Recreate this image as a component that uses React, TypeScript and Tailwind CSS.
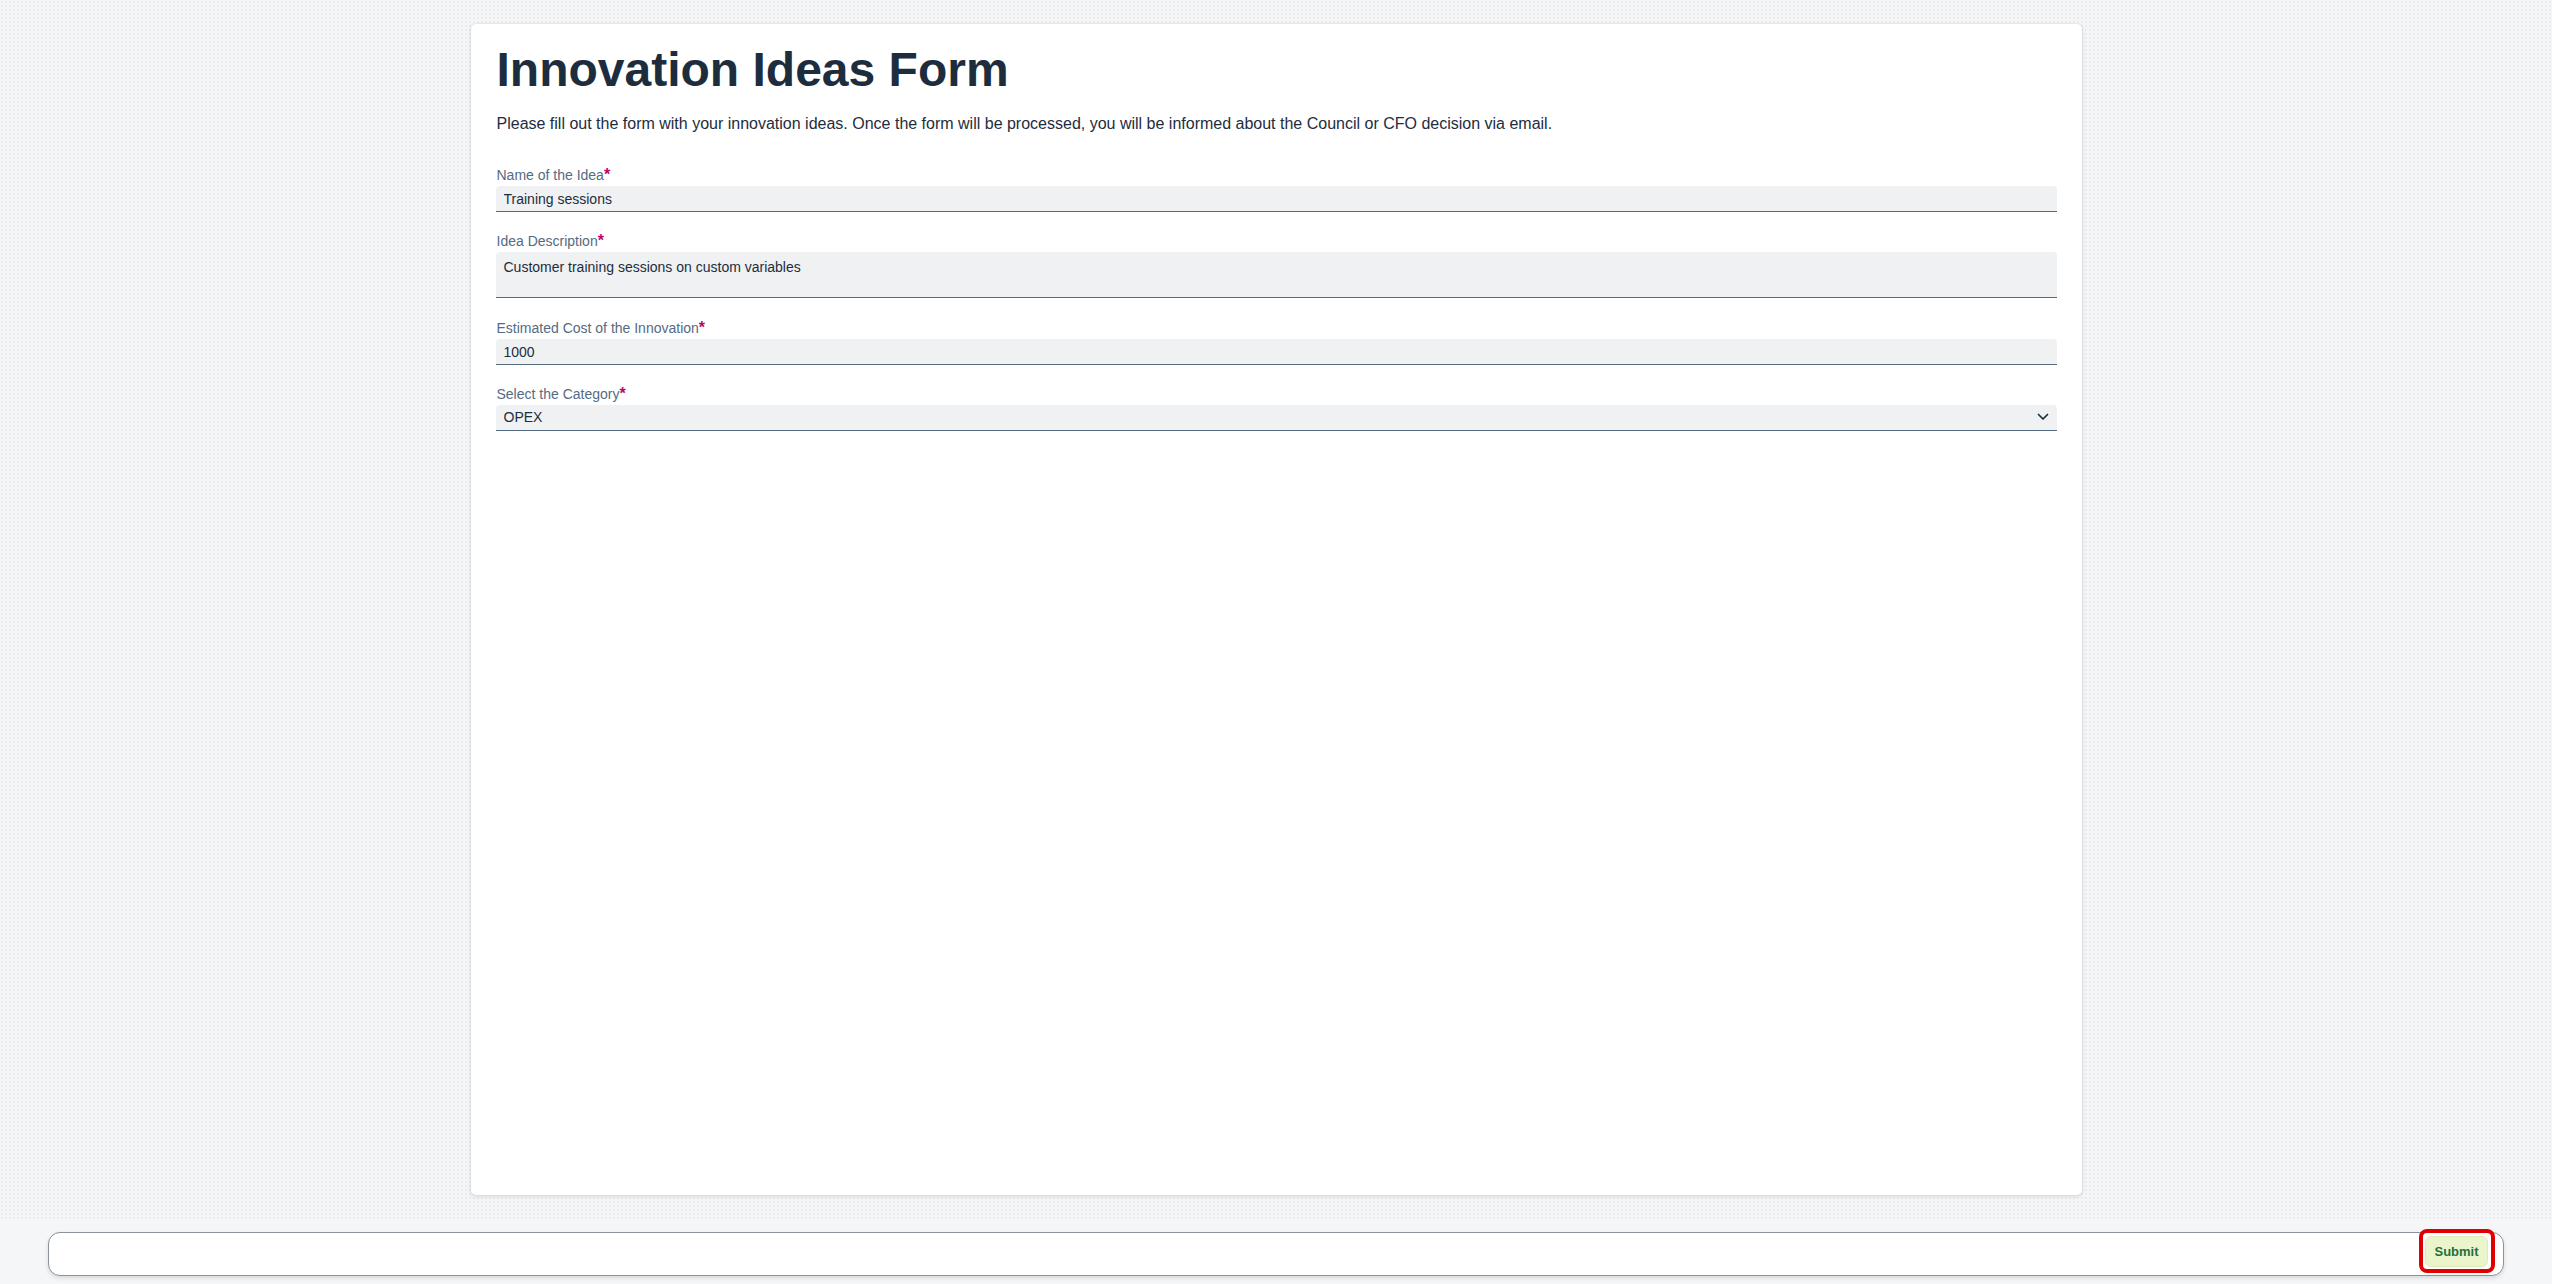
import { useState } from 'react'

const fieldFont = "font-['Liberation_Sans',Arial,sans-serif]"

function FieldLabel({ text }: { text: string }) {
  return (
    <label className="mb-[3px] block text-[14px] leading-[16px] text-[#556b82]">
      {text}
      <span className="text-[16px] font-bold leading-none text-[#ba066c]">*</span>
    </label>
  )
}

export default function App() {
  const [name, setName] = useState('Training sessions')
  const [description, setDescription] = useState('Customer training sessions on custom variables')
  const [cost, setCost] = useState('1000')
  const [category, setCategory] = useState('OPEX')

  return (
    <div className={`flex h-[1284px] flex-col bg-[#f5f6f7] ${fieldFont}`}>
      <div className="flex-1 bg-[radial-gradient(circle,#e3e5e9_0.6px,transparent_0.9px)] bg-[length:4px_4px] pt-6">
        <div className="mx-auto flex h-[1171px] w-[1611px] flex-col rounded-[5px] bg-white px-[25px] pt-[18px] shadow-[0_0_2px_rgba(34,53,72,0.2),0_2px_4px_rgba(34,53,72,0.1)]">
          <h1 className="pl-px text-[48px] font-bold leading-[56px] text-[#1d2d3e]">Innovation Ideas Form</h1>
          <p className="mt-[16px] pl-px text-[16px] leading-[20px] text-[#1d2d3e]">
            Please fill out the form with your innovation ideas. Once the form will be processed, you will be informed about the Council or CFO decision via email.
          </p>

          <form className="mt-[33px] flex flex-col gap-[21px]">
            <div className="flex flex-col pl-px">
              <FieldLabel text="Name of the Idea" />
              <input
                value={name}
                onChange={(e) => setName(e.target.value)}
                className="-ml-px h-[26px] w-[calc(100%+1px)] rounded-t-[4px] border-b border-[#556b81] bg-[#eff1f2] px-[8px] text-[14px] text-[#1d2d3e] outline-none"
              />
            </div>

            <div className="flex flex-col pl-px">
              <FieldLabel text="Idea Description" />
              <textarea
                value={description}
                onChange={(e) => setDescription(e.target.value)}
                rows={2}
                className="-ml-px h-[46px] w-[calc(100%+1px)] resize-none rounded-t-[4px] border-b border-[#556b81] bg-[#eff1f2] px-[8px] pt-[7px] text-[14px] leading-[16px] text-[#1d2d3e] outline-none"
              />
            </div>

            <div className="mt-px flex flex-col pl-px">
              <FieldLabel text="Estimated Cost of the Innovation" />
              <input
                value={cost}
                onChange={(e) => setCost(e.target.value)}
                className="-ml-px h-[26px] w-[calc(100%+1px)] rounded-t-[4px] border-b border-[#556b81] bg-[#eff1f2] px-[8px] text-[14px] text-[#1d2d3e] outline-none"
              />
            </div>

            <div className="flex flex-col pl-px">
              <FieldLabel text="Select the Category" />
              <div className="relative -ml-px">
                <select
                  value={category}
                  onChange={(e) => setCategory(e.target.value)}
                  className="h-[26px] w-full appearance-none rounded-t-[4px] border-b border-[#556b81] bg-[#eff1f2] px-[8px] text-[14px] text-[#1d2d3e] outline-none"
                >
                  <option>OPEX</option>
                  <option>CAPEX</option>
                </select>
                <svg
                  className="pointer-events-none absolute right-[8px] top-[8px] h-[8px] w-[12px]"
                  viewBox="0 0 12 8"
                  fill="none"
                  stroke="#1d2d3e"
                  strokeWidth={1.7}
                  strokeLinecap="round"
                  strokeLinejoin="round"
                >
                  <path d="M1.5 1.5 6 6l4.5-4.5" />
                </svg>
              </div>
            </div>
          </form>
        </div>
      </div>

      <div className="flex h-[64px] items-start px-[48px] pb-[8px] pt-[12px]">
        <div className="flex h-[44px] flex-1 items-center justify-end rounded-[12px] border border-[#8b929c] bg-white pr-[8px] shadow-[0_2px_4px_rgba(34,53,72,0.15)]">
          <div className="-mt-[6px] rounded-[8px] border-[4px] border-[#e00000] pb-[2px] pl-[2px] pr-[3px] pt-[3px]">
            <button
              type="button"
              className="h-[31px] w-[63px] rounded-[6px] border border-[#dcebb8] bg-[#ebf5cb] text-[13px] font-bold text-[#256f3a]"
            >
              Submit
            </button>
          </div>
        </div>
      </div>
    </div>
  )
}
